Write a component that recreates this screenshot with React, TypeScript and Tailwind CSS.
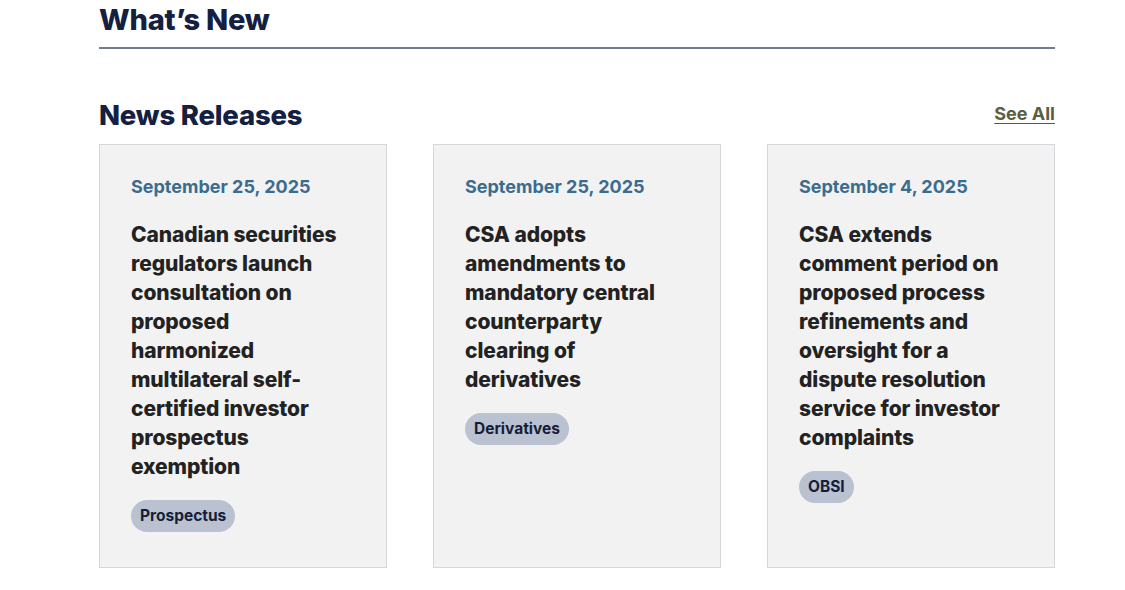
const releases = [
  {
    date: 'September 25, 2025',
    title:
      'Canadian securities regulators launch consultation on proposed harmonized multilateral self-certified investor prospectus exemption',
    tag: 'Prospectus',
  },
  {
    date: 'September 25, 2025',
    title: 'CSA adopts amendments to mandatory central counterparty clearing of derivatives',
    tag: 'Derivatives',
  },
  {
    date: 'September 4, 2025',
    title:
      'CSA extends comment period on proposed process refinements and oversight for a dispute resolution service for investor complaints',
    tag: 'OBSI',
  },
];

export default function App() {
  return (
    <div className="min-h-screen w-full bg-white font-['Inter','Liberation_Sans',sans-serif]">
      <div className="ml-[99px] w-[956px]">
        {/* Section header */}
        <h1 className="pt-[2px] text-[29px] font-extrabold leading-[36px] tracking-[-0.2px] text-[#14203f]">
          What’s New
        </h1>
        <div className="mt-[9px] h-[2px] bg-[#737b8e]" />

        {/* News releases */}
        <div className="mt-[50px] flex items-end justify-between">
          <h2 className="text-[27.5px] font-extrabold leading-[32px] tracking-[-0.2px] text-[#14203f]">
            News Releases
          </h2>
          <a
            href="#"
            className="mb-[5px] text-[18px] font-bold leading-[24px] text-[#5b5e43] underline underline-offset-[3px]"
          >
            See All
          </a>
        </div>

        <div className="mt-[13px] grid grid-cols-3 gap-[46px]">
          {releases.map((r) => (
            <div
              key={r.title}
              className="h-[424px] border border-[#d3d6da] bg-[#f2f2f2] px-[31px] pt-[30px]"
            >
              <p className="text-[18px] font-bold leading-[24px] text-[#3a6c8e]">{r.date}</p>
              <h3 className="mt-[21px] w-[216px] text-[21px] font-extrabold leading-[29px] tracking-[-0.1px] text-[#222222]">
                {r.title}
              </h3>
              <span className="mt-[19px] inline-block rounded-full bg-[#bac1d0] px-[9px] text-[15.5px] font-bold leading-[32px] text-[#161d39]">
                {r.tag}
              </span>
            </div>
          ))}
        </div>
      </div>
    </div>
  );
}
